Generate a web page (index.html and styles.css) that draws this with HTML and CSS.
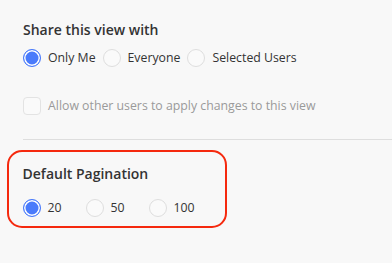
FILE: index.html
```html
<!DOCTYPE html>
<html>
<head>
<meta charset="utf-8">
<link rel="stylesheet" href="styles.css">
</head>
<body>
<div class="page">
  <section class="share">
    <h2 class="title">Share this view with</h2>
    <div class="radio-row">
      <label class="radio"><span class="dot checked"></span><span class="lbl">Only Me</span></label>
      <label class="radio"><span class="dot"></span><span class="lbl">Everyone</span></label>
      <label class="radio"><span class="dot"></span><span class="lbl">Selected Users</span></label>
    </div>
    <label class="check"><span class="box"></span><span class="check-lbl">Allow other users to apply changes to this view</span></label>
  </section>
  <div class="divider"></div>
  <section class="pagination">
    <h2 class="title">Default Pagination</h2>
    <div class="radio-row wide">
      <label class="radio"><span class="dot checked"></span><span class="lbl">20</span></label>
      <label class="radio"><span class="dot"></span><span class="lbl">50</span></label>
      <label class="radio"><span class="dot"></span><span class="lbl">100</span></label>
    </div>
  </section>
</div>
</body>
</html>
```
FILE: styles.css
```css
html, body {
  margin: 0;
  padding: 0;
  background: #f8f8f8;
}
body {
  font-family: "Open Sans", "Noto Sans", sans-serif;
  color: #333;
  width: 392px;
  height: 263px;
  overflow: hidden;
}
.page {
  padding-top: 20px;
}
.share {
  padding-left: 23px;
}
.title {
  margin: 0;
  font-size: 14px;
  font-weight: 600;
  line-height: 20px;
  color: #333;
}
.radio-row {
  display: flex;
  align-items: center;
  gap: 7px;
  margin-top: 9px;
  height: 18px;
}
.radio {
  display: flex;
  align-items: center;
  gap: 7px;
}
.dot {
  width: 18px;
  height: 18px;
  box-sizing: border-box;
  border-radius: 50%;
  border: 1px solid #dedede;
  background: #fafafa;
  flex: none;
}
.dot.checked {
  background: #4a7bfb;
  border: 1.5px solid #4a7bfb;
  box-shadow: inset 0 0 0 1.5px #fff;
}
.lbl {
  font-size: 12.3px;
  line-height: 18px;
  color: #333;
}
.check {
  display: flex;
  align-items: center;
  gap: 7px;
  margin-top: 30px;
}
.box {
  width: 18px;
  height: 18px;
  box-sizing: border-box;
  border: 1px solid #e3e3e3;
  border-radius: 4px;
  background: #fafafa;
  flex: none;
}
.check-lbl {
  font-size: 12.3px;
  line-height: 18px;
  color: #9a9a9a;
}
.divider {
  margin: 24px 0 0 23px;
  border-top: 1px solid #dedede;
}
.pagination {
  margin: 10px 0 0 7px;
  width: 220px;
  box-sizing: border-box;
  border: 2.5px solid #f5290e;
  border-radius: 15px;
  padding: 11.5px 13.5px 9.5px 13.5px;
}
.wide {
  gap: 0;
  margin-top: 15px;
}
.wide .radio {
  width: 64.5px;
}
```
